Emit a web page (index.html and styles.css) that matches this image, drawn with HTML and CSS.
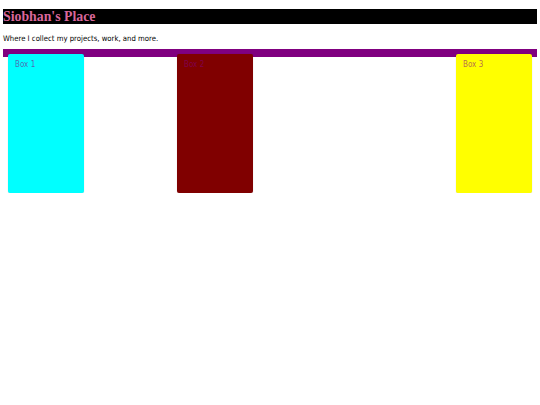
FILE: index.html
```html
<!DOCTYPE html>
<html>
<head>
<meta charset="utf-8">
<link rel="stylesheet" href="styles.css">
</head>
<body>
<h1 class="title">Siobhan's Place</h1>
<p class="intro">Where I collect my projects, work, and more.</p>
<div class="strip">
  <div class="box box-cyan">Box 1</div>
  <div class="box box-maroon">Box 2</div>
  <div class="box box-yellow">Box 3</div>
</div>
</body>
</html>
```
FILE: styles.css
```css
html, body {
  margin: 0;
  background: #fff;
}
body {
  padding: 9px 3px 0;
}
.title {
  margin: 0;
  background: #000;
  color: #d9679a;
  font-family: "Liberation Serif", serif;
  font-weight: bold;
  font-size: 13.8px;
  line-height: 15px;
}
.intro {
  margin: 10px 0 6px;
  font-family: "DejaVu Sans Condensed", "DejaVu Sans", sans-serif;
  font-size: 7.7px;
  line-height: 9px;
  color: #000;
}
.strip {
  display: flex;
  align-items: flex-start;
  border-top: 8px solid #800080;
  padding: 0 5px;
}
.box {
  flex: 0 0 auto;
  width: 76px;
  height: 139px;
  margin-top: -3px;
  border-radius: 2px;
  box-sizing: border-box;
  padding: 6px 7px;
  font-family: "DejaVu Sans Condensed", "DejaVu Sans", sans-serif;
  font-size: 8px;
  line-height: 9px;
  color: rgba(128, 0, 128, 0.6);
  box-shadow: 0 0 1px rgba(0, 0, 0, 0.25);
}
.box-cyan { background: #00ffff; }
.box-maroon { background: #800000; margin-left: 93px; }
.box-yellow { background: #ffff00; margin-left: auto; }
```
